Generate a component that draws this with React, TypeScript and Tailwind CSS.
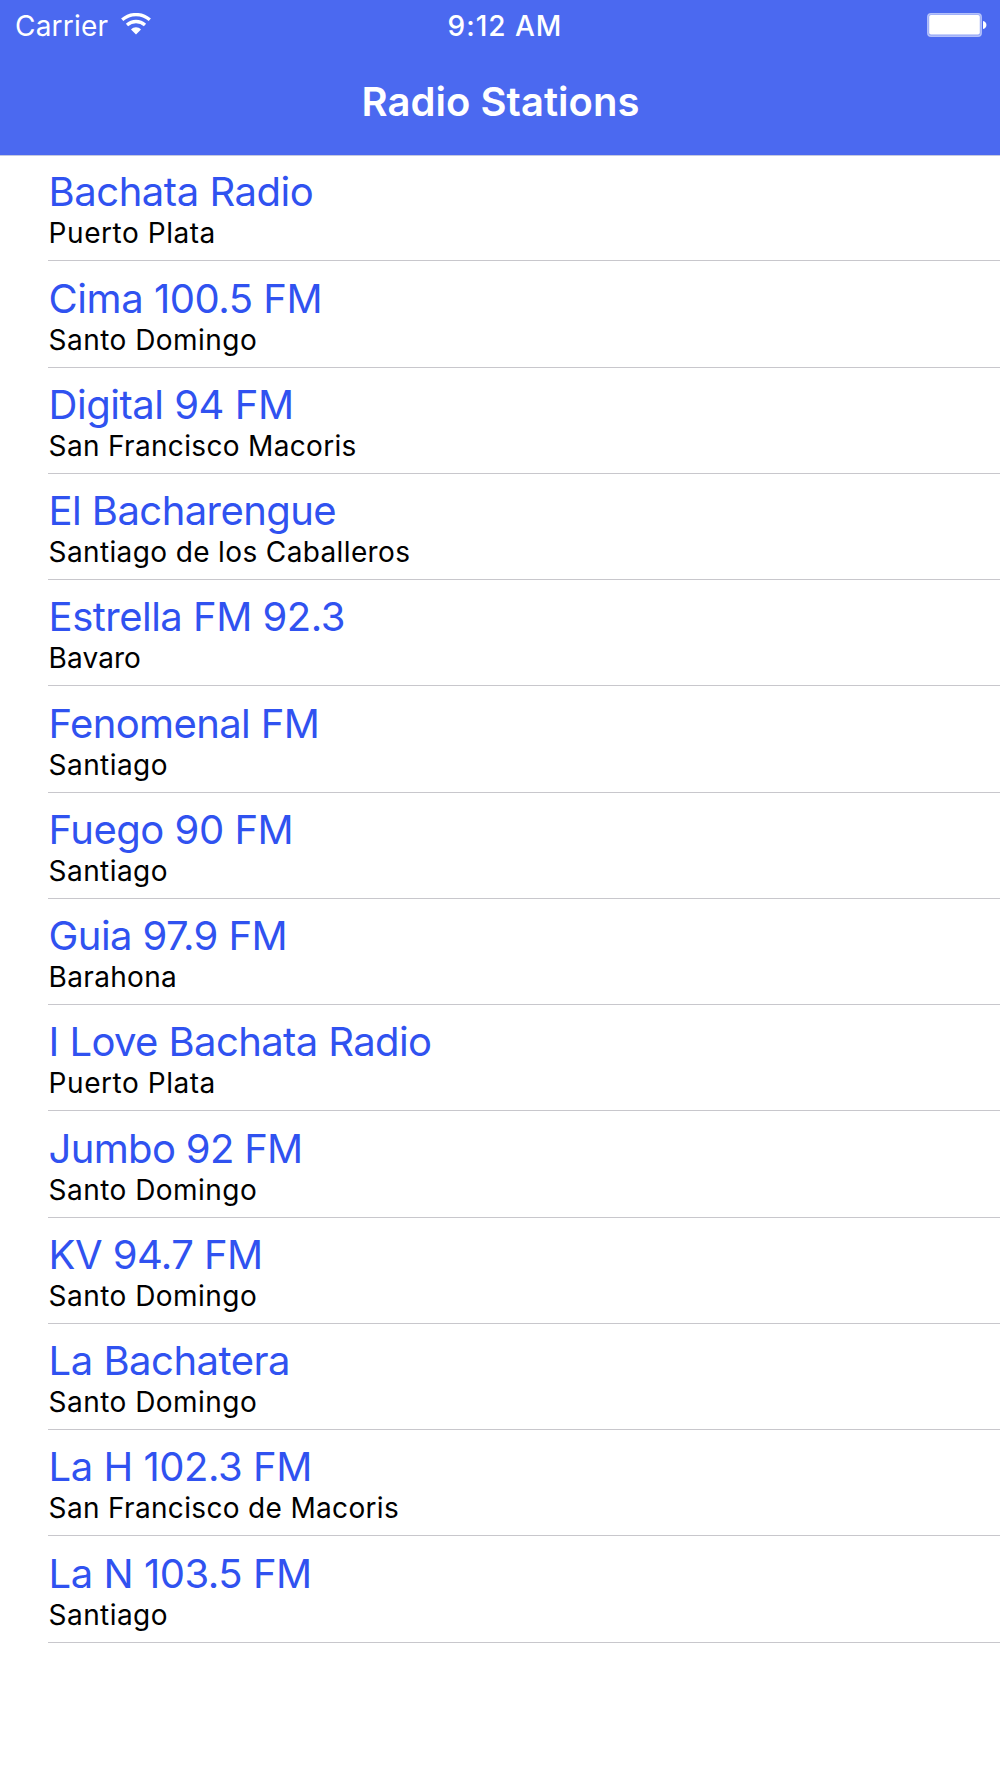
import clsx from "clsx";

const stations = [
  { name: "Bachata Radio", city: "Puerto Plata", nameSpacing: "tracking-[-0.47px]", citySpacing: "tracking-[0.55px]" },
  { name: "Cima 100.5 FM", city: "Santo Domingo", nameSpacing: "tracking-[-0.47px]", citySpacing: "tracking-[0.46px]" },
  { name: "Digital 94 FM", city: "San Francisco Macoris", nameSpacing: "tracking-[-0.47px]", citySpacing: "tracking-[0.33px]" },
  { name: "El Bacharengue", city: "Santiago de los Caballeros", nameSpacing: "tracking-[-0.57px]", citySpacing: "tracking-[0.37px]" },
  { name: "Estrella FM 92.3", city: "Bavaro", nameSpacing: "tracking-[-0.51px]", citySpacing: "tracking-[0.1px]" },
  { name: "Fenomenal FM", city: "Santiago", nameSpacing: "tracking-[-0.62px]", citySpacing: "tracking-[0.43px]" },
  { name: "Fuego 90 FM", city: "Santiago", nameSpacing: "tracking-[-0.5px]", citySpacing: "tracking-[0.43px]" },
  { name: "Guia 97.9 FM", city: "Barahona", nameSpacing: "tracking-[-0.6px]", citySpacing: "tracking-[0.33px]" },
  { name: "I Love Bachata Radio", city: "Puerto Plata", nameSpacing: "tracking-[-0.6px]", citySpacing: "tracking-[0.55px]" },
  { name: "Jumbo 92 FM", city: "Santo Domingo", nameSpacing: "tracking-[-0.68px]", citySpacing: "tracking-[0.46px]" },
  { name: "KV 94.7 FM", city: "Santo Domingo", nameSpacing: "tracking-[-0.55px]", citySpacing: "tracking-[0.46px]" },
  { name: "La Bachatera", city: "Santo Domingo", nameSpacing: "tracking-[-0.5px]", citySpacing: "tracking-[0.46px]" },
  { name: "La H 102.3 FM", city: "San Francisco de Macoris", nameSpacing: "tracking-[-0.47px]", citySpacing: "tracking-[0.33px]" },
  { name: "La N 103.5 FM", city: "Santiago", nameSpacing: "tracking-[-0.47px]", citySpacing: "tracking-[0.43px]" },
];

const WifiIcon = () => (
  <svg width="30" height="22" viewBox="0 0 30 22" fill="none" stroke="white" strokeWidth="3.3">
    <path d="M1.2 6.8C9 -0.2 21 -0.2 28.8 6.8" />
    <path d="M6 12c5.2-4.7 12.8-4.7 18 0" />
    <path d="M15 21.5l-5-5.1c2.8-2.8 7.2-2.8 10 0z" fill="white" stroke="none" />
  </svg>
);

const BatteryIcon = () => (
  <svg width="60" height="24" viewBox="0 0 60 24">
    <rect x="0.8" y="0.8" width="53.4" height="22.4" rx="3.2" fill="#8fa2f6" stroke="#b3c0f9" strokeWidth="1.5" />
    <rect x="2.2" y="2" width="50.6" height="19.6" rx="1.8" fill="white" />
    <path d="M56 8c4.6 1 4.6 7 0 8z" fill="white" />
  </svg>
);

const App = () => {
  return (
    <div className="min-h-[1778px] w-full bg-white font-['Inter',sans-serif]">
      <header className="h-[156px] bg-[#4b69f0] border-b border-[#c4c9e0] text-white">
        <div className="grid grid-cols-3 items-start h-[50px] pt-[9px] text-[28px] leading-[34px]">
          <div className="flex items-start pl-[15px]">
            <span className="w-[106px] tracking-[0.2px]">Carrier</span>
            <span className="pt-[4px]"><WifiIcon /></span>
          </div>
          <span className="pl-[10px] text-center font-medium tracking-[1px]">9:12 AM</span>
          <div className="flex justify-end pt-[4px] pr-[13px]">
            <BatteryIcon />
          </div>
        </div>
        <h1 className="pt-[27px] pl-[1px] text-center text-[40px] leading-[50px] font-semibold tracking-[0.05px]">
          Radio Stations
        </h1>
      </header>

      <ul className="-mt-px pl-[48px]">
        {stations.map((station) => (
          <li key={station.name} className="h-[106.25px] pt-[13.4px] border-b border-[#c8c7cc]">
            <p className={clsx("pl-[0.6px] text-[40px] leading-[48px] text-[#3052f0]", station.nameSpacing)}>
              {station.name}
            </p>
            <p className={clsx("pl-[0.6px] text-[28px] leading-[35px] text-black", station.citySpacing)}>
              {station.city}
            </p>
          </li>
        ))}
      </ul>
    </div>
  );
};

export default App;
